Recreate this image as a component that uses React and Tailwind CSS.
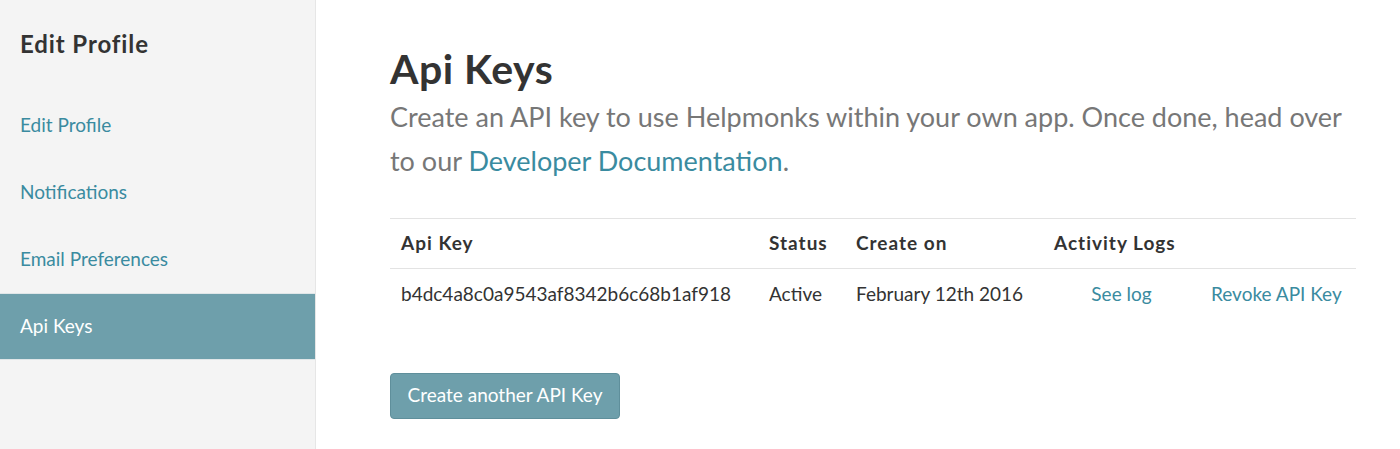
export default function App() {
  const nav = ["Edit Profile", "Notifications", "Email Preferences", "Api Keys"];
  return (
    <div className="flex h-[449px] w-[1400px] overflow-hidden bg-white font-['Lato','Liberation_Sans',sans-serif]">
      <aside className="w-[316px] shrink-0 border-r border-[#e6e6e6] bg-[#f4f4f4]">
        <h2 className="pl-[20px] pt-[30px] text-[24px] font-bold leading-[28px] tracking-[0.9px] text-[#333]">Edit Profile</h2>
        <ul className="mt-[34px]">
          {nav.map((n) => (
            <li
              key={n}
              className={
                n === "Api Keys"
                  ? "flex h-[67px] items-center bg-[#6e9fab] pl-[20px] text-[19px] text-white border-y border-[#e0e6e8]"
                  : "flex h-[67px] items-center pl-[20px] text-[19px] text-[#3a8ba0]"
              }
            >
              {n}
            </li>
          ))}
        </ul>
      </aside>
      <main className="flex-1 pl-[74px] pr-[40px] pt-[44px]">
        <h1 className="text-[41px] font-bold leading-[50px] tracking-[0.5px] text-[#333]">Api Keys</h1>
        <p className="mt-[1px] text-[27px] leading-[44px] text-[#777]">
          Create an API key to use Helpmonks within your own app. Once done, head over to our{" "}
          <a className="text-[#3a8ba0]">Developer Documentation</a>.
        </p>
        <table className="mt-[35px] w-[966px] table-fixed border-t border-[#e3e3e3] text-[19px] text-[#333]">
          <thead>
            <tr className="h-[50px] border-b border-[#e3e3e3]">
              <th className="w-[368px] pl-[11px] text-left font-bold tracking-[1px]">Api Key</th>
              <th className="w-[87px] pl-[11px] text-left font-bold tracking-[1px]">Status</th>
              <th className="w-[198px] pl-[11px] text-left font-bold tracking-[1px]">Create on</th>
              <th className="w-[157px] pl-[11px] text-left font-bold tracking-[1px]">Activity Logs</th>
              <th className="pl-[11px]"></th>
            </tr>
          </thead>
          <tbody>
            <tr className="h-[51px]">
              <td className="pl-[11px]">b4dc4a8c0a9543af8342b6c68b1af918</td>
              <td className="pl-[11px]">Active</td>
              <td className="pl-[11px]">February 12th 2016</td>
              <td className="text-center text-[#3a8ba0]">See log</td>
              <td className="pl-[11px] text-[#3a8ba0]">Revoke API Key</td>
            </tr>
          </tbody>
        </table>
        <button className="mt-[53px] h-[46px] w-[230px] rounded-[4px] border border-[#5f8f9b] bg-[#6e9fab] text-[19px] text-white">
          Create another API Key
        </button>
      </main>
    </div>
  );
}
